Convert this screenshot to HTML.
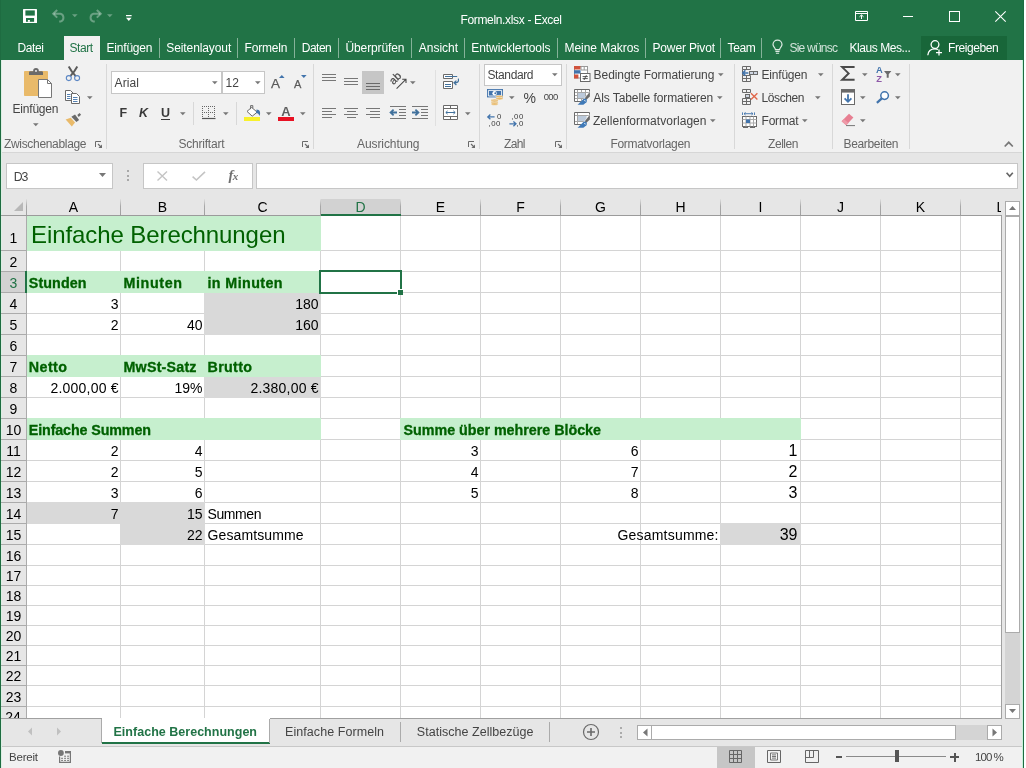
<!DOCTYPE html>
<html><head><meta charset="utf-8"><title>Formeln.xlsx - Excel</title>
<style>
html,body{margin:0;padding:0;}
body{width:1026px;height:768px;overflow:hidden;position:relative;background:#fff;font-family:"Liberation Sans",sans-serif;}
div,span.t,svg{position:absolute;}
span.t{white-space:pre;}
svg{overflow:visible;}
#w{left:0;top:0;width:1026px;height:768px;will-change:transform;}
</style></head><body><div id="w">
<div style="left:0px;top:0px;width:1024px;height:60px;background:#217346;"></div>
<div style="left:0px;top:60px;width:1024px;height:708px;background:#217346;"></div>
<div style="left:1px;top:60px;width:1022px;height:92px;background:#f1f1f1;"></div>
<div style="left:1px;top:152px;width:1022px;height:567px;background:#e6e6e6;"></div>
<div style="left:1px;top:152px;width:1022px;height:1px;background:#d6d6d6;"></div>
<div style="left:1px;top:719px;width:1022px;height:27px;background:#e6e6e6;"></div>
<div style="left:1px;top:746px;width:1022px;height:1px;background:#c8c8c8;"></div>
<div style="left:1px;top:747px;width:1022px;height:21px;background:#f1f1f1;"></div>
<div style="left:1024px;top:0px;width:2px;height:768px;background:#fff;"></div>
<div style="left:0px;top:0px;width:1px;height:768px;background:#1e6c41;"></div>
<div style="left:1023px;top:0px;width:1px;height:768px;background:#1e6c41;"></div>
<div style="left:1022px;top:60px;width:1px;height:708px;background:#c9efd9;"></div>
<div style="left:1px;top:60px;width:1px;height:708px;background:#dcefe3;"></div>
<span class="t" style="left:460.5px;top:14px;font-size:12px;line-height:12px;color:#fff;letter-spacing:-0.343px;">Formeln.xlsx - Excel</span>
<div style="left:64px;top:36px;width:36px;height:24px;background:#f1f1f1;"></div>
<span class="t" style="left:17.5px;top:42px;font-size:12px;line-height:12px;color:#fff;letter-spacing:-0.378px;">Datei</span>
<span class="t" style="left:69.5px;top:42px;font-size:12px;line-height:12px;color:#217346;letter-spacing:-0.461px;">Start</span>
<span class="t" style="left:106.5px;top:42px;font-size:12px;line-height:12px;color:#fff;letter-spacing:-0.196px;">Einfügen</span>
<span class="t" style="left:166.25px;top:42px;font-size:12px;line-height:12px;color:#fff;letter-spacing:-0.095px;">Seitenlayout</span>
<span class="t" style="left:244.5px;top:42px;font-size:12px;line-height:12px;color:#fff;letter-spacing:-0.168px;">Formeln</span>
<span class="t" style="left:301.75px;top:42px;font-size:12px;line-height:12px;color:#fff;letter-spacing:-0.505px;">Daten</span>
<span class="t" style="left:345.5px;top:42px;font-size:12px;line-height:12px;color:#fff;letter-spacing:-0.115px;">Überprüfen</span>
<span class="t" style="left:418.75px;top:42px;font-size:12px;line-height:12px;color:#fff;letter-spacing:-0.017px;">Ansicht</span>
<span class="t" style="left:471.25px;top:42px;font-size:12px;line-height:12px;color:#fff;letter-spacing:-0.055px;">Entwicklertools</span>
<span class="t" style="left:564.5px;top:42px;font-size:12px;line-height:12px;color:#fff;letter-spacing:-0.055px;">Meine Makros</span>
<span class="t" style="left:652.5px;top:42px;font-size:12px;line-height:12px;color:#fff;letter-spacing:-0.153px;">Power Pivot</span>
<span class="t" style="left:727.5px;top:42px;font-size:12px;line-height:12px;color:#fff;letter-spacing:-0.365px;">Team</span>
<div style="left:159px;top:38px;width:1px;height:20px;background:rgba(255,255,255,0.45);"></div>
<div style="left:237px;top:38px;width:1px;height:20px;background:rgba(255,255,255,0.45);"></div>
<div style="left:294px;top:38px;width:1px;height:20px;background:rgba(255,255,255,0.45);"></div>
<div style="left:338px;top:38px;width:1px;height:20px;background:rgba(255,255,255,0.45);"></div>
<div style="left:411px;top:38px;width:1px;height:20px;background:rgba(255,255,255,0.45);"></div>
<div style="left:464px;top:38px;width:1px;height:20px;background:rgba(255,255,255,0.45);"></div>
<div style="left:557px;top:38px;width:1px;height:20px;background:rgba(255,255,255,0.45);"></div>
<div style="left:645px;top:38px;width:1px;height:20px;background:rgba(255,255,255,0.45);"></div>
<div style="left:720px;top:38px;width:1px;height:20px;background:rgba(255,255,255,0.45);"></div>
<div style="left:761px;top:38px;width:1px;height:20px;background:rgba(255,255,255,0.45);"></div>
<span class="t" style="left:789.5px;top:42px;font-size:12px;line-height:12px;color:rgba(255,255,255,0.8);letter-spacing:-0.774px;">Sie wünsc</span>
<span class="t" style="left:849.5px;top:42px;font-size:12px;line-height:12px;color:#fff;letter-spacing:-0.434px;">Klaus Mes...</span>
<div style="left:921px;top:36px;width:86px;height:24px;background:#186639;"></div>
<span class="t" style="left:948px;top:42px;font-size:12px;line-height:12px;color:#fff;letter-spacing:-0.410px;">Freigeben</span>
<div style="left:106px;top:64px;width:1px;height:85px;background:#d8d8d8;"></div>
<div style="left:313px;top:64px;width:1px;height:85px;background:#d8d8d8;"></div>
<div style="left:479px;top:64px;width:1px;height:85px;background:#d8d8d8;"></div>
<div style="left:566px;top:64px;width:1px;height:85px;background:#d8d8d8;"></div>
<div style="left:734px;top:64px;width:1px;height:85px;background:#d8d8d8;"></div>
<div style="left:832px;top:64px;width:1px;height:85px;background:#d8d8d8;"></div>
<div style="left:909px;top:64px;width:1px;height:85px;background:#d8d8d8;"></div>
<div style="left:435px;top:70px;width:1px;height:56px;background:#e0e0e0;"></div>
<div style="left:193px;top:102px;width:1px;height:23px;background:#d8d8d8;"></div>
<div style="left:236px;top:102px;width:1px;height:23px;background:#d8d8d8;"></div>
<span class="t" style="left:4px;top:138px;font-size:12px;line-height:12px;color:#666;letter-spacing:-0.324px;">Zwischenablage</span>
<span class="t" style="left:178.5px;top:138px;font-size:12px;line-height:12px;color:#666;letter-spacing:-0.224px;">Schriftart</span>
<span class="t" style="left:357px;top:138px;font-size:12px;line-height:12px;color:#666;letter-spacing:-0.087px;">Ausrichtung</span>
<span class="t" style="left:504px;top:138px;font-size:12px;line-height:12px;color:#666;letter-spacing:-0.614px;">Zahl</span>
<span class="t" style="left:610.4px;top:138px;font-size:12px;line-height:12px;color:#666;letter-spacing:-0.303px;">Formatvorlagen</span>
<span class="t" style="left:768px;top:138px;font-size:12px;line-height:12px;color:#666;letter-spacing:-0.436px;">Zellen</span>
<span class="t" style="left:843.5px;top:138px;font-size:12px;line-height:12px;color:#666;letter-spacing:-0.338px;">Bearbeiten</span>
<span class="t" style="left:12.5px;top:103px;font-size:12px;line-height:12px;color:#444;letter-spacing:-0.196px;">Einfügen</span>
<div style="left:111px;top:71px;width:111px;height:23px;background:#fff;border:1px solid #c6c6c6;box-sizing:border-box;"></div>
<div style="left:222px;top:71px;width:43px;height:23px;background:#fff;border:1px solid #c6c6c6;box-sizing:border-box;"></div>
<span class="t" style="left:114.5px;top:77px;font-size:12px;line-height:12px;color:#444;letter-spacing:0.123px;">Arial</span>
<span class="t" style="left:225.5px;top:77px;font-size:12px;line-height:12px;color:#444;">12</span>
<span class="t" style="left:119.5px;top:107px;font-size:12.5px;line-height:12.5px;color:#3a3a3a;font-weight:bold;">F</span>
<span class="t" style="left:139px;top:107px;font-size:12.5px;line-height:12.5px;color:#3a3a3a;font-weight:bold;font-style:italic;">K</span>
<span class="t" style="left:161px;top:107px;font-size:12.5px;line-height:12.5px;color:#3a3a3a;font-weight:bold;">U</span>
<div style="left:161px;top:118.5px;width:9px;height:1px;background:#3a3a3a;"></div>
<div style="left:362px;top:71px;width:22px;height:23px;background:#c6c6c6;"></div>
<div style="left:484px;top:64px;width:78px;height:22px;background:#fff;border:1px solid #c6c6c6;box-sizing:border-box;"></div>
<span class="t" style="left:487.5px;top:69px;font-size:12px;line-height:12px;color:#444;letter-spacing:-0.386px;">Standard</span>
<span class="t" style="left:523.5px;top:91px;font-size:14px;line-height:14px;color:#444;">%</span>
<span class="t" style="left:543.8px;top:92px;font-size:9.5px;line-height:9.5px;color:#444;letter-spacing:-0.724px;">000</span>
<span class="t" style="left:593.6px;top:69px;font-size:12px;line-height:12px;color:#444;letter-spacing:-0.068px;">Bedingte Formatierung</span>
<span class="t" style="left:593.3px;top:92px;font-size:12px;line-height:12px;color:#444;letter-spacing:-0.084px;">Als Tabelle formatieren</span>
<span class="t" style="left:593px;top:115px;font-size:12px;line-height:12px;color:#444;letter-spacing:0.041px;">Zellenformatvorlagen</span>
<span class="t" style="left:761.5px;top:69px;font-size:12px;line-height:12px;color:#444;letter-spacing:-0.196px;">Einfügen</span>
<span class="t" style="left:761.5px;top:92px;font-size:12px;line-height:12px;color:#444;letter-spacing:-0.395px;">Löschen</span>
<span class="t" style="left:761.5px;top:115px;font-size:12px;line-height:12px;color:#444;letter-spacing:-0.201px;">Format</span>
<div style="left:6px;top:163px;width:107px;height:26px;background:#fff;border:1px solid #c6c6c6;box-sizing:border-box;"></div>
<span class="t" style="left:13.7px;top:171px;font-size:12.3px;line-height:12.3px;color:#444;letter-spacing:-1.123px;">D3</span>
<div style="left:143px;top:163px;width:110px;height:26px;background:#fff;border:1px solid #c6c6c6;box-sizing:border-box;"></div>
<div style="left:256px;top:163px;width:762px;height:26px;background:#fff;border:1px solid #c6c6c6;box-sizing:border-box;"></div>
<div style="left:127px;top:170px;width:2px;height:2px;background:#a8a8a8;"></div>
<div style="left:127px;top:174.5px;width:2px;height:2px;background:#a8a8a8;"></div>
<div style="left:127px;top:179px;width:2px;height:2px;background:#a8a8a8;"></div>
<div style="left:27px;top:216px;width:974px;height:502px;background:#fff;"></div>
<div style="left:26px;top:199px;width:1px;height:16px;background:linear-gradient(#e0e0e0,#a8a8a8 45%,#a0a0a0);"></div>
<div style="left:120px;top:199px;width:1px;height:16px;background:linear-gradient(#e0e0e0,#a8a8a8 45%,#a0a0a0);"></div>
<div style="left:204px;top:199px;width:1px;height:16px;background:linear-gradient(#e0e0e0,#a8a8a8 45%,#a0a0a0);"></div>
<div style="left:320px;top:199px;width:1px;height:16px;background:linear-gradient(#e0e0e0,#a8a8a8 45%,#a0a0a0);"></div>
<div style="left:400px;top:199px;width:1px;height:16px;background:linear-gradient(#e0e0e0,#a8a8a8 45%,#a0a0a0);"></div>
<div style="left:480px;top:199px;width:1px;height:16px;background:linear-gradient(#e0e0e0,#a8a8a8 45%,#a0a0a0);"></div>
<div style="left:560px;top:199px;width:1px;height:16px;background:linear-gradient(#e0e0e0,#a8a8a8 45%,#a0a0a0);"></div>
<div style="left:640px;top:199px;width:1px;height:16px;background:linear-gradient(#e0e0e0,#a8a8a8 45%,#a0a0a0);"></div>
<div style="left:720px;top:199px;width:1px;height:16px;background:linear-gradient(#e0e0e0,#a8a8a8 45%,#a0a0a0);"></div>
<div style="left:800px;top:199px;width:1px;height:16px;background:linear-gradient(#e0e0e0,#a8a8a8 45%,#a0a0a0);"></div>
<div style="left:880px;top:199px;width:1px;height:16px;background:linear-gradient(#e0e0e0,#a8a8a8 45%,#a0a0a0);"></div>
<div style="left:960px;top:199px;width:1px;height:16px;background:linear-gradient(#e0e0e0,#a8a8a8 45%,#a0a0a0);"></div>
<div style="left:1px;top:215px;width:1001px;height:1px;background:#9b9b9b;"></div>
<div style="left:26px;top:216px;width:1px;height:502px;background:#ababab;"></div>
<div style="left:1px;top:250px;width:25px;height:1px;background:#ababab;"></div>
<div style="left:1px;top:271px;width:25px;height:1px;background:#ababab;"></div>
<div style="left:1px;top:292px;width:25px;height:1px;background:#ababab;"></div>
<div style="left:1px;top:313px;width:25px;height:1px;background:#ababab;"></div>
<div style="left:1px;top:334px;width:25px;height:1px;background:#ababab;"></div>
<div style="left:1px;top:355px;width:25px;height:1px;background:#ababab;"></div>
<div style="left:1px;top:376px;width:25px;height:1px;background:#ababab;"></div>
<div style="left:1px;top:397px;width:25px;height:1px;background:#ababab;"></div>
<div style="left:1px;top:418px;width:25px;height:1px;background:#ababab;"></div>
<div style="left:1px;top:439px;width:25px;height:1px;background:#ababab;"></div>
<div style="left:1px;top:460px;width:25px;height:1px;background:#ababab;"></div>
<div style="left:1px;top:481px;width:25px;height:1px;background:#ababab;"></div>
<div style="left:1px;top:502px;width:25px;height:1px;background:#ababab;"></div>
<div style="left:1px;top:523px;width:25px;height:1px;background:#ababab;"></div>
<div style="left:1px;top:544px;width:25px;height:1px;background:#ababab;"></div>
<div style="left:1px;top:565px;width:25px;height:1px;background:#ababab;"></div>
<div style="left:1px;top:585px;width:25px;height:1px;background:#ababab;"></div>
<div style="left:1px;top:605px;width:25px;height:1px;background:#ababab;"></div>
<div style="left:1px;top:625px;width:25px;height:1px;background:#ababab;"></div>
<div style="left:1px;top:645px;width:25px;height:1px;background:#ababab;"></div>
<div style="left:1px;top:665px;width:25px;height:1px;background:#ababab;"></div>
<div style="left:1px;top:685px;width:25px;height:1px;background:#ababab;"></div>
<div style="left:1px;top:706px;width:25px;height:1px;background:#ababab;"></div>
<div style="left:120px;top:216px;width:1px;height:502px;background:#d4d4d4;"></div>
<div style="left:204px;top:216px;width:1px;height:502px;background:#d4d4d4;"></div>
<div style="left:320px;top:216px;width:1px;height:502px;background:#d4d4d4;"></div>
<div style="left:400px;top:216px;width:1px;height:502px;background:#d4d4d4;"></div>
<div style="left:480px;top:216px;width:1px;height:502px;background:#d4d4d4;"></div>
<div style="left:560px;top:216px;width:1px;height:502px;background:#d4d4d4;"></div>
<div style="left:640px;top:216px;width:1px;height:502px;background:#d4d4d4;"></div>
<div style="left:720px;top:216px;width:1px;height:502px;background:#d4d4d4;"></div>
<div style="left:800px;top:216px;width:1px;height:502px;background:#d4d4d4;"></div>
<div style="left:880px;top:216px;width:1px;height:502px;background:#d4d4d4;"></div>
<div style="left:960px;top:216px;width:1px;height:502px;background:#d4d4d4;"></div>
<div style="left:27px;top:250px;width:974px;height:1px;background:#d4d4d4;"></div>
<div style="left:27px;top:271px;width:974px;height:1px;background:#d4d4d4;"></div>
<div style="left:27px;top:292px;width:974px;height:1px;background:#d4d4d4;"></div>
<div style="left:27px;top:313px;width:974px;height:1px;background:#d4d4d4;"></div>
<div style="left:27px;top:334px;width:974px;height:1px;background:#d4d4d4;"></div>
<div style="left:27px;top:355px;width:974px;height:1px;background:#d4d4d4;"></div>
<div style="left:27px;top:376px;width:974px;height:1px;background:#d4d4d4;"></div>
<div style="left:27px;top:397px;width:974px;height:1px;background:#d4d4d4;"></div>
<div style="left:27px;top:418px;width:974px;height:1px;background:#d4d4d4;"></div>
<div style="left:27px;top:439px;width:974px;height:1px;background:#d4d4d4;"></div>
<div style="left:27px;top:460px;width:974px;height:1px;background:#d4d4d4;"></div>
<div style="left:27px;top:481px;width:974px;height:1px;background:#d4d4d4;"></div>
<div style="left:27px;top:502px;width:974px;height:1px;background:#d4d4d4;"></div>
<div style="left:27px;top:523px;width:974px;height:1px;background:#d4d4d4;"></div>
<div style="left:27px;top:544px;width:974px;height:1px;background:#d4d4d4;"></div>
<div style="left:27px;top:565px;width:974px;height:1px;background:#d4d4d4;"></div>
<div style="left:27px;top:585px;width:974px;height:1px;background:#d4d4d4;"></div>
<div style="left:27px;top:605px;width:974px;height:1px;background:#d4d4d4;"></div>
<div style="left:27px;top:625px;width:974px;height:1px;background:#d4d4d4;"></div>
<div style="left:27px;top:645px;width:974px;height:1px;background:#d4d4d4;"></div>
<div style="left:27px;top:665px;width:974px;height:1px;background:#d4d4d4;"></div>
<div style="left:27px;top:685px;width:974px;height:1px;background:#d4d4d4;"></div>
<div style="left:27px;top:706px;width:974px;height:1px;background:#d4d4d4;"></div>
<div style="left:1001px;top:216px;width:1px;height:503px;background:#a0a0a0;"></div>
<div style="left:1px;top:718px;width:1001px;height:1px;background:#a0a0a0;"></div>
<div style="left:321px;top:199px;width:79px;height:15px;background:#d2d2d2;"></div>
<div style="left:321px;top:214px;width:80px;height:2px;background:#217346;"></div>
<div style="left:1px;top:272px;width:24px;height:20px;background:#d2d2d2;"></div>
<div style="left:25px;top:271px;width:2px;height:22px;background:#217346;"></div>
<span class="t" style="left:68.83125px;top:200px;font-size:14px;line-height:14px;color:#000;">A</span>
<span class="t" style="left:157.83125px;top:200px;font-size:14px;line-height:14px;color:#000;">B</span>
<span class="t" style="left:257.44453125px;top:200px;font-size:14px;line-height:14px;color:#000;">C</span>
<span class="t" style="left:355.44453125px;top:200px;font-size:14px;line-height:14px;color:#217346;">D</span>
<span class="t" style="left:435.83125px;top:200px;font-size:14px;line-height:14px;color:#000;">E</span>
<span class="t" style="left:516.22421875px;top:200px;font-size:14px;line-height:14px;color:#000;">F</span>
<span class="t" style="left:595.05546875px;top:200px;font-size:14px;line-height:14px;color:#000;">G</span>
<span class="t" style="left:675.44453125px;top:200px;font-size:14px;line-height:14px;color:#000;">H</span>
<span class="t" style="left:758.55546875px;top:200px;font-size:14px;line-height:14px;color:#000;">I</span>
<span class="t" style="left:837.0px;top:200px;font-size:14px;line-height:14px;color:#000;">J</span>
<span class="t" style="left:915.83125px;top:200px;font-size:14px;line-height:14px;color:#000;">K</span>
<span class="t" style="left:996.5px;top:200px;font-size:14px;line-height:14px;color:#000;">L</span>
<div style="left:1001px;top:199px;width:21px;height:16px;background:#e6e6e6;"></div>
<svg style="left:13px;top:201px;" width="11" height="11" viewBox="0 0 11 11"><path d="M10 1 L10 10 L1 10 Z" fill="#b8b8b8"/></svg>
<span class="t" style="left:9.60703125px;top:231px;font-size:14px;line-height:14px;color:#000;">1</span>
<span class="t" style="left:9.60703125px;top:255px;font-size:14px;line-height:14px;color:#000;">2</span>
<span class="t" style="left:9.60703125px;top:276px;font-size:14px;line-height:14px;color:#217346;">3</span>
<span class="t" style="left:9.60703125px;top:297px;font-size:14px;line-height:14px;color:#000;">4</span>
<span class="t" style="left:9.60703125px;top:318px;font-size:14px;line-height:14px;color:#000;">5</span>
<span class="t" style="left:9.60703125px;top:339px;font-size:14px;line-height:14px;color:#000;">6</span>
<span class="t" style="left:9.60703125px;top:360px;font-size:14px;line-height:14px;color:#000;">7</span>
<span class="t" style="left:9.60703125px;top:381px;font-size:14px;line-height:14px;color:#000;">8</span>
<span class="t" style="left:9.60703125px;top:402px;font-size:14px;line-height:14px;color:#000;">9</span>
<span class="t" style="left:5.7140625px;top:423px;font-size:14px;line-height:14px;color:#000;">10</span>
<span class="t" style="left:6.23359375px;top:444px;font-size:14px;line-height:14px;color:#000;">11</span>
<span class="t" style="left:5.7140625px;top:465px;font-size:14px;line-height:14px;color:#000;">12</span>
<span class="t" style="left:5.7140625px;top:486px;font-size:14px;line-height:14px;color:#000;">13</span>
<span class="t" style="left:5.7140625px;top:507px;font-size:14px;line-height:14px;color:#000;">14</span>
<span class="t" style="left:5.7140625px;top:528px;font-size:14px;line-height:14px;color:#000;">15</span>
<span class="t" style="left:5.7140625px;top:549px;font-size:14px;line-height:14px;color:#000;">16</span>
<span class="t" style="left:5.7140625px;top:569px;font-size:14px;line-height:14px;color:#000;">17</span>
<span class="t" style="left:5.7140625px;top:589px;font-size:14px;line-height:14px;color:#000;">18</span>
<span class="t" style="left:5.7140625px;top:609px;font-size:14px;line-height:14px;color:#000;">19</span>
<span class="t" style="left:5.7140625px;top:629px;font-size:14px;line-height:14px;color:#000;">20</span>
<span class="t" style="left:5.7140625px;top:649px;font-size:14px;line-height:14px;color:#000;">21</span>
<span class="t" style="left:5.7140625px;top:669px;font-size:14px;line-height:14px;color:#000;">22</span>
<span class="t" style="left:5.7140625px;top:690px;font-size:14px;line-height:14px;color:#000;">23</span>
<div style="left:1px;top:707px;width:25px;height:11px;overflow:hidden"><span class="t" style="left:4.2px;top:3.2px;font-size:14px;line-height:14px;color:#000">24</span></div>
<div style="left:204px;top:292px;width:117px;height:22px;background:#d9d9d9;"></div>
<div style="left:204px;top:313px;width:117px;height:22px;background:#d9d9d9;"></div>
<div style="left:204px;top:376px;width:117px;height:22px;background:#d9d9d9;"></div>
<div style="left:27px;top:502px;width:178px;height:22px;background:#d9d9d9;"></div>
<div style="left:120px;top:523px;width:85px;height:22px;background:#d9d9d9;"></div>
<div style="left:720px;top:523px;width:81px;height:22px;background:#d9d9d9;"></div>
<div style="left:27px;top:216px;width:294px;height:35px;background:#c6efce;"></div>
<div style="left:27px;top:271px;width:294px;height:22px;background:#c6efce;"></div>
<div style="left:27px;top:355px;width:294px;height:22px;background:#c6efce;"></div>
<div style="left:27px;top:418px;width:294px;height:22px;background:#c6efce;"></div>
<div style="left:400px;top:418px;width:401px;height:22px;background:#c6efce;"></div>
<span class="t" style="left:31px;top:223px;font-size:24px;line-height:24px;color:#006100;letter-spacing:-0.085px;">Einfache Berechnungen</span>
<span class="t" style="left:28.8px;top:276px;font-size:14.3px;line-height:14.3px;color:#006100;letter-spacing:0.085px;font-weight:bold;-webkit-text-stroke:0.3px #006100;">Stunden</span>
<span class="t" style="left:123.5px;top:276px;font-size:14.3px;line-height:14.3px;color:#006100;letter-spacing:0.616px;font-weight:bold;-webkit-text-stroke:0.3px #006100;">Minuten</span>
<span class="t" style="left:207.5px;top:276px;font-size:14.3px;line-height:14.3px;color:#006100;letter-spacing:0.390px;font-weight:bold;-webkit-text-stroke:0.3px #006100;">in Minuten</span>
<span class="t" style="left:28.8px;top:360px;font-size:14.3px;line-height:14.3px;color:#006100;letter-spacing:0.415px;font-weight:bold;-webkit-text-stroke:0.3px #006100;">Netto</span>
<span class="t" style="left:123.5px;top:360px;font-size:14.3px;line-height:14.3px;color:#006100;letter-spacing:0.187px;font-weight:bold;-webkit-text-stroke:0.3px #006100;">MwSt-Satz</span>
<span class="t" style="left:207.5px;top:360px;font-size:14.3px;line-height:14.3px;color:#006100;letter-spacing:0.323px;font-weight:bold;-webkit-text-stroke:0.3px #006100;">Brutto</span>
<span class="t" style="left:28.8px;top:423px;font-size:14.3px;line-height:14.3px;color:#006100;letter-spacing:-0.126px;font-weight:bold;-webkit-text-stroke:0.3px #006100;">Einfache Summen</span>
<span class="t" style="left:403.5px;top:423px;font-size:14.3px;line-height:14.3px;color:#006100;letter-spacing:-0.017px;font-weight:bold;-webkit-text-stroke:0.3px #006100;">Summe über mehrere Blöcke</span>
<span class="t" style="right:907.5px;top:297px;font-size:14px;line-height:14px;color:#000;">3</span>
<span class="t" style="right:707.5px;top:297px;font-size:14px;line-height:14px;color:#000;">180</span>
<span class="t" style="right:907.5px;top:318px;font-size:14px;line-height:14px;color:#000;">2</span>
<span class="t" style="right:823.5px;top:318px;font-size:14px;line-height:14px;color:#000;">40</span>
<span class="t" style="right:707.5px;top:318px;font-size:14px;line-height:14px;color:#000;">160</span>
<span class="t" style="right:907.5px;top:381px;font-size:14px;line-height:14px;color:#000;letter-spacing:0.200px;margin-right:-0.200px;">2.000,00 €</span>
<span class="t" style="right:823.5px;top:381px;font-size:14px;line-height:14px;color:#000;">19%</span>
<span class="t" style="right:707.5px;top:381px;font-size:14px;line-height:14px;color:#000;letter-spacing:0.200px;margin-right:-0.200px;">2.380,00 €</span>
<span class="t" style="right:907.5px;top:444px;font-size:14px;line-height:14px;color:#000;">2</span>
<span class="t" style="right:823.5px;top:444px;font-size:14px;line-height:14px;color:#000;">4</span>
<span class="t" style="right:547.5px;top:444px;font-size:14px;line-height:14px;color:#000;">3</span>
<span class="t" style="right:387.5px;top:444px;font-size:14px;line-height:14px;color:#000;">6</span>
<span class="t" style="right:228.5px;top:443px;font-size:16px;line-height:16px;color:#000;">1</span>
<span class="t" style="right:907.5px;top:465px;font-size:14px;line-height:14px;color:#000;">2</span>
<span class="t" style="right:823.5px;top:465px;font-size:14px;line-height:14px;color:#000;">5</span>
<span class="t" style="right:547.5px;top:465px;font-size:14px;line-height:14px;color:#000;">4</span>
<span class="t" style="right:387.5px;top:465px;font-size:14px;line-height:14px;color:#000;">7</span>
<span class="t" style="right:228.5px;top:464px;font-size:16px;line-height:16px;color:#000;">2</span>
<span class="t" style="right:907.5px;top:486px;font-size:14px;line-height:14px;color:#000;">3</span>
<span class="t" style="right:823.5px;top:486px;font-size:14px;line-height:14px;color:#000;">6</span>
<span class="t" style="right:547.5px;top:486px;font-size:14px;line-height:14px;color:#000;">5</span>
<span class="t" style="right:387.5px;top:486px;font-size:14px;line-height:14px;color:#000;">8</span>
<span class="t" style="right:228.5px;top:485px;font-size:16px;line-height:16px;color:#000;">3</span>
<span class="t" style="right:907.5px;top:507px;font-size:14px;line-height:14px;color:#000;">7</span>
<span class="t" style="right:823.5px;top:507px;font-size:14px;line-height:14px;color:#000;">15</span>
<span class="t" style="right:823.5px;top:528px;font-size:14px;line-height:14px;color:#000;">22</span>
<span class="t" style="left:207.5px;top:507px;font-size:14px;line-height:14px;color:#000;letter-spacing:-0.404px;">Summen</span>
<span class="t" style="left:207.5px;top:528px;font-size:14px;line-height:14px;color:#000;letter-spacing:0.109px;">Gesamtsumme</span>
<span class="t" style="right:307.5px;top:528px;font-size:14px;line-height:14px;color:#000;letter-spacing:0.200px;margin-right:-0.200px;">Gesamtsumme:</span>
<span class="t" style="right:228.5px;top:527px;font-size:16px;line-height:16px;color:#000;">39</span>
<div style="left:319px;top:270px;width:83px;height:24px;border:2px solid #217346;box-sizing:border-box;"></div>
<div style="left:397px;top:289px;width:6px;height:6px;background:#fff;"></div>
<div style="left:398px;top:290px;width:5px;height:5px;background:#217346;"></div>
<div style="left:1005px;top:201px;width:15px;height:15px;background:#fff;border:1px solid #ababab;box-sizing:border-box;"></div>
<svg style="left:1009px;top:206px;" width="7" height="4" viewBox="0 0 7 4"><path d="M0 4 L3.5 0 L7 4 Z" fill="#777"/></svg>
<div style="left:1005px;top:216px;width:15px;height:417px;background:#fff;border:1px solid #ababab;box-sizing:border-box;"></div>
<div style="left:1005px;top:633px;width:15px;height:71px;background:#d4d4d4;"></div>
<div style="left:1005px;top:704px;width:15px;height:15px;background:#fff;border:1px solid #ababab;box-sizing:border-box;"></div>
<svg style="left:1009px;top:709px;" width="7" height="4" viewBox="0 0 7 4"><path d="M0 0 L3.5 4 L7 0 Z" fill="#777"/></svg>
<div style="left:637px;top:725px;width:15px;height:15px;background:#fff;border:1px solid #ababab;box-sizing:border-box;"></div>
<svg style="left:642px;top:728px;" width="6" height="9" viewBox="0 0 6 9"><path d="M5.5 0.5 L1 4.5 L5.5 8.5 Z" fill="#777"/></svg>
<div style="left:651px;top:725px;width:305px;height:15px;background:#fff;border:1px solid #ababab;box-sizing:border-box;"></div>
<div style="left:956px;top:725px;width:31px;height:15px;background:#d4d4d4;"></div>
<div style="left:987px;top:725px;width:15px;height:15px;background:#fff;border:1px solid #ababab;box-sizing:border-box;"></div>
<svg style="left:992px;top:728px;" width="6" height="9" viewBox="0 0 6 9"><path d="M0.5 0.5 L5 4.5 L0.5 8.5 Z" fill="#777"/></svg>
<div style="left:619.5px;top:727px;width:2px;height:2px;background:#ababab;"></div>
<div style="left:619.5px;top:731.5px;width:2px;height:2px;background:#ababab;"></div>
<div style="left:619.5px;top:736px;width:2px;height:2px;background:#ababab;"></div>
<div style="left:102px;top:718px;width:168px;height:25px;background:#fff;"></div>
<div style="left:102px;top:742px;width:168px;height:2px;background:#217346;"></div>
<div style="left:101px;top:719px;width:1px;height:24px;background:#ababab;"></div>
<div style="left:269px;top:719px;width:1px;height:24px;background:#ababab;"></div>
<span class="t" style="left:113.5px;top:726px;font-size:12.5px;line-height:12.5px;color:#217346;letter-spacing:0.021px;font-weight:bold;">Einfache Berechnungen</span>
<span class="t" style="left:285px;top:726px;font-size:12.5px;line-height:12.5px;color:#444;letter-spacing:0.069px;">Einfache Formeln</span>
<span class="t" style="left:416.75px;top:726px;font-size:12.5px;line-height:12.5px;color:#444;letter-spacing:0.038px;">Statische Zellbezüge</span>
<div style="left:400px;top:722px;width:1px;height:20px;background:#ababab;"></div>
<div style="left:549px;top:722px;width:1px;height:20px;background:#ababab;"></div>
<svg style="left:27px;top:727px;" width="6" height="9" viewBox="0 0 6 9"><path d="M5 0.5 L1 4.5 L5 8.5 Z" fill="#c0c0c0"/></svg>
<svg style="left:56px;top:727px;" width="6" height="9" viewBox="0 0 6 9"><path d="M1 0.5 L5 4.5 L1 8.5 Z" fill="#c0c0c0"/></svg>
<svg style="left:582px;top:723px;" width="18" height="18" viewBox="0 0 18 18"><circle cx="9" cy="9" r="7.5" fill="none" stroke="#6a6a6a" stroke-width="1.2"/><path d="M9 5v8M5 9h8" stroke="#6a6a6a" stroke-width="1.6"/></svg>
<span class="t" style="left:9px;top:752px;font-size:11.5px;line-height:11.5px;color:#444;letter-spacing:-0.208px;">Bereit</span>
<div style="left:717px;top:747px;width:38px;height:21px;background:#c6c6c6;"></div>
<span class="t" style="left:975px;top:752px;font-size:11.5px;line-height:11.5px;color:#444;letter-spacing:-0.952px;">100 %</span>
<div style="left:846px;top:756px;width:100px;height:1px;background:#8a8a8a;"></div>
<div style="left:895px;top:750px;width:4px;height:12px;background:#555;"></div>
<div style="left:836px;top:756px;width:6px;height:2px;background:#555;"></div>
<div style="left:950px;top:756px;width:9px;height:2px;background:#555;"></div>
<div style="left:953.5px;top:752.5px;width:2px;height:9px;background:#555;"></div>
<svg style="left:23px;top:9px;" width="14" height="14" viewBox="0 0 14 14"><rect x="0" y="0" width="14" height="14" rx="0.6" fill="#fff"/><rect x="2.4" y="1.4" width="9.4" height="5.2" fill="#217346"/><rect x="3" y="9" width="8.1" height="3.8" fill="#217346"/><rect x="4.9" y="11" width="2" height="1.8" fill="#fff"/></svg>
<svg style="left:52px;top:9px;" width="14" height="13" viewBox="0 0 14 13"><path d="M5.2 1 L1.2 4.8 L5.2 8.6" fill="none" stroke="rgba(255,255,255,0.33)" stroke-width="2"/><path d="M1.6 4.8 H8.6 A4.1 4.1 0 0 1 8.6 12.6 H7.2" fill="none" stroke="rgba(255,255,255,0.33)" stroke-width="2"/></svg>
<svg style="left:72px;top:14px;" width="6" height="4" viewBox="0 0 6 4"><path d="M0 0.3 H5.6 L2.8 3.3 Z" fill="rgba(255,255,255,0.33)"/></svg>
<svg style="left:87px;top:9px;" width="15" height="13" viewBox="0 0 15 13"><path d="M9.8 1 L13.8 4.8 L9.8 8.6" fill="none" stroke="rgba(255,255,255,0.33)" stroke-width="2"/><path d="M13.4 4.8 H6.4 A4.1 4.1 0 0 0 6.4 12.6 H7.8" fill="none" stroke="rgba(255,255,255,0.33)" stroke-width="2"/></svg>
<svg style="left:107px;top:14px;" width="6" height="4" viewBox="0 0 6 4"><path d="M0 0.3 H5.6 L2.8 3.3 Z" fill="rgba(255,255,255,0.33)"/></svg>
<svg style="left:126px;top:15px;" width="6" height="6" viewBox="0 0 6 6"><path d="M0 0 H5.6 V1.2 H0 Z M0 2.8 H5.6 L2.8 5.9 Z" fill="#fff"/></svg>
<svg style="left:855px;top:11px;" width="13" height="10" viewBox="0 0 13 10"><path d="M0.5 0.5 H12.5 V9.5 H0.5 Z M0.5 2.5 H12.5" fill="none" stroke="#fff" stroke-width="1"/><path d="M6.5 8 V4.2 M4.5 5.8 L6.5 3.9 L8.5 5.8" fill="none" stroke="#fff" stroke-width="1"/></svg>
<div style="left:903px;top:16px;width:10px;height:1px;background:#fff;"></div>
<div style="left:949px;top:11px;width:11px;height:11px;border:1px solid #fff;box-sizing:border-box;"></div>
<svg style="left:995px;top:11px;" width="11" height="11" viewBox="0 0 11 11"><path d="M0.3 0.3 L10.7 10.7 M10.7 0.3 L0.3 10.7" stroke="#fff" stroke-width="1.1" fill="none"/></svg>
<svg style="left:772px;top:40px;" width="11" height="14" viewBox="0 0 11 14"><path d="M3.4 9.6 C3.4 7.6 1 7 1 4.6 A4.5 4.5 0 0 1 10 4.6 C10 7 7.6 7.6 7.6 9.6 Z" fill="none" stroke="rgba(255,255,255,0.85)" stroke-width="1.2"/><path d="M3.4 11.4 H7.6 M3.9 13.2 H7.1" stroke="rgba(255,255,255,0.85)" stroke-width="1.1"/></svg>
<svg style="left:927px;top:40px;" width="16" height="16" viewBox="0 0 16 16"><circle cx="8" cy="4.6" r="3.9" fill="none" stroke="#fff" stroke-width="1.3"/><path d="M0.8 15.3 C1.2 10.8 4 8.9 8 8.9 C9.3 8.9 10.2 9.1 11 9.5" fill="none" stroke="#fff" stroke-width="1.3"/><path d="M12 9.6 V15.6 M9 12.6 H15" stroke="#fff" stroke-width="1.3"/></svg>
<svg style="left:24px;top:68px;" width="28" height="30" viewBox="0 0 28 30"><rect x="0" y="3" width="24" height="25" rx="0.8" fill="#e9ba6a"/><path d="M5 7 V4.4 Q5 3.3 6.1 3.3 H9.2 V2.6 A2.8 2.6 0 0 1 14.8 2.6 V3.3 H17.9 Q19 3.3 19 4.4 V7 Z" fill="#6a6a6a"/><circle cx="12" cy="2.9" r="0.9" fill="#fff"/><path d="M14.5 11.5 H23.5 L27.5 15.5 V29.5 H14.5 Z" fill="#fff" stroke="#777" stroke-width="1"/><path d="M23.5 11.5 V15.5 H27.5" fill="none" stroke="#777" stroke-width="1"/></svg>
<svg style="left:33px;top:123px;" width="6" height="4" viewBox="0 0 6 4"><path d="M0 0.3 H5.6 L2.8 3.3 Z" fill="#777"/></svg>
<svg style="left:65px;top:66px;" width="16" height="15" viewBox="0 0 16 15"><path d="M3.7 0.5 Q6.4 5.6 10.7 10.2 M12.3 0.5 Q9.6 5.6 5.3 10.2" stroke="#5a5a5a" stroke-width="1.9" fill="none"/><circle cx="3.8" cy="12.1" r="2.5" fill="none" stroke="#5b86c4" stroke-width="1.1"/><circle cx="12.1" cy="12.1" r="2.5" fill="none" stroke="#5b86c4" stroke-width="1.1"/></svg>
<svg style="left:65px;top:90px;" width="15" height="14" viewBox="0 0 15 14"><path d="M0.5 0.5 H5.5 L8.5 3.5 V10.5 H0.5 Z" fill="#fff" stroke="#6a6a6a"/><path d="M2 4.5H5.5M2 6.5H5.5M2 8.5H5.5" stroke="#4274ac" stroke-width="0.9"/><path d="M6.5 3.5 H11.5 L14.5 6.5 V13.5 H6.5 Z" fill="#fff" stroke="#6a6a6a"/><path d="M8 7.5H12.5M8 9.5H12.5M8 11.5H12.5" stroke="#4274ac" stroke-width="0.9"/></svg>
<svg style="left:87px;top:96px;" width="6" height="4" viewBox="0 0 6 4"><path d="M0 0.3 H5.6 L2.8 3.3 Z" fill="#777"/></svg>
<svg style="left:65px;top:113px;" width="17" height="14" viewBox="0 0 17 14"><path d="M0.65 6.6 L5.75 4.8 L10 9.6 L6.85 13.4 Z" fill="#e9ba6a"/><path d="M6.4 3.7 L10 1.4 L14.1 6.9 L11.4 9 Z" fill="#6a6a6a"/><path d="M12.3 1.9 L14.6 0 L16.1 1.7 L13.7 4.1 Z" fill="#6a6a6a"/></svg>
<svg style="left:95px;top:141px;" width="8" height="8" viewBox="0 0 8 8"><path d="M0.5 6 V0.5 H6" fill="none" stroke="#6a6a6a"/><path d="M3 3 L6 6" fill="none" stroke="#6a6a6a" stroke-width="1.1"/><path d="M7 3.4 V7 H3.4 Z" fill="#6a6a6a"/></svg>
<svg style="left:302px;top:141px;" width="8" height="8" viewBox="0 0 8 8"><path d="M0.5 6 V0.5 H6" fill="none" stroke="#6a6a6a"/><path d="M3 3 L6 6" fill="none" stroke="#6a6a6a" stroke-width="1.1"/><path d="M7 3.4 V7 H3.4 Z" fill="#6a6a6a"/></svg>
<svg style="left:468px;top:141px;" width="8" height="8" viewBox="0 0 8 8"><path d="M0.5 6 V0.5 H6" fill="none" stroke="#6a6a6a"/><path d="M3 3 L6 6" fill="none" stroke="#6a6a6a" stroke-width="1.1"/><path d="M7 3.4 V7 H3.4 Z" fill="#6a6a6a"/></svg>
<svg style="left:555px;top:141px;" width="8" height="8" viewBox="0 0 8 8"><path d="M0.5 6 V0.5 H6" fill="none" stroke="#6a6a6a"/><path d="M3 3 L6 6" fill="none" stroke="#6a6a6a" stroke-width="1.1"/><path d="M7 3.4 V7 H3.4 Z" fill="#6a6a6a"/></svg>
<svg style="left:212px;top:81px;" width="6" height="4" viewBox="0 0 6 4"><path d="M0 0.3 H5.6 L2.8 3.3 Z" fill="#777"/></svg>
<svg style="left:255px;top:81px;" width="6" height="4" viewBox="0 0 6 4"><path d="M0 0.3 H5.6 L2.8 3.3 Z" fill="#777"/></svg>
<span class="t" style="left:271px;top:77px;font-size:13.5px;line-height:13.5px;color:#5a5a5a;-webkit-text-stroke:0.25px #5a5a5a;">A</span>
<svg style="left:279px;top:75px;" width="6" height="3" viewBox="0 0 6 3"><path d="M0 3 L2.8 0 L5.6 3 Z" fill="#4274ac"/></svg>
<span class="t" style="left:294px;top:79px;font-size:11px;line-height:11px;color:#5a5a5a;-webkit-text-stroke:0.25px #5a5a5a;">A</span>
<svg style="left:301px;top:75px;" width="6" height="3" viewBox="0 0 6 3"><path d="M0 0 L2.8 3 L5.6 0 Z" fill="#4274ac"/></svg>
<svg style="left:180px;top:112px;" width="6" height="4" viewBox="0 0 6 4"><path d="M0 0.3 H5.6 L2.8 3.3 Z" fill="#777"/></svg>
<svg style="left:202px;top:106px;" width="14" height="14" viewBox="0 0 14 14"><path d="M0 0.5H13 M0 6.5H13 M0.5 0V12 M6.5 0V12 M12.5 0V12" stroke="#666" stroke-width="1" stroke-dasharray="1 1" fill="none" shape-rendering="crispEdges"/><path d="M0 12.5 H13.5" stroke="#555" stroke-width="1.2"/></svg>
<svg style="left:223px;top:112px;" width="6" height="4" viewBox="0 0 6 4"><path d="M0 0.3 H5.6 L2.8 3.3 Z" fill="#777"/></svg>
<div style="left:244px;top:117px;width:16px;height:4px;background:#f8f12c;"></div>
<svg style="left:246px;top:105px;" width="15" height="12" viewBox="0 0 15 12"><path d="M5.6 2.4 L11.2 7.2 L6.2 11.2 L1 6.4 Z" fill="#fff" stroke="#6a6a6a" stroke-width="1"/><path d="M4.6 4.2 V0.6 H6.8 V3.2" fill="none" stroke="#6a6a6a" stroke-width="1"/><path d="M10.6 4.6 C13.6 4.6 15 7.4 13.6 11 C12.8 9.2 12 8.2 10 7.8 Z" fill="#4274ac"/></svg>
<svg style="left:266px;top:112px;" width="6" height="4" viewBox="0 0 6 4"><path d="M0 0.3 H5.6 L2.8 3.3 Z" fill="#777"/></svg>
<span class="t" style="left:281.2px;top:105px;font-size:13px;line-height:13px;color:#606060;font-weight:bold;">A</span>
<div style="left:278px;top:117px;width:16px;height:4px;background:#e81123;"></div>
<svg style="left:300px;top:112px;" width="6" height="4" viewBox="0 0 6 4"><path d="M0 0.3 H5.6 L2.8 3.3 Z" fill="#777"/></svg>
<div style="left:322px;top:74px;width:14px;height:1px;background:#777;"></div>
<div style="left:322px;top:77px;width:14px;height:1px;background:#777;"></div>
<div style="left:322px;top:80px;width:14px;height:1px;background:#777;"></div>
<div style="left:344px;top:78px;width:14px;height:1px;background:#777;"></div>
<div style="left:344px;top:81px;width:14px;height:1px;background:#777;"></div>
<div style="left:344px;top:84px;width:14px;height:1px;background:#777;"></div>
<div style="left:366px;top:83px;width:14px;height:1px;background:#6a6a6a;"></div>
<div style="left:366px;top:86px;width:14px;height:1px;background:#6a6a6a;"></div>
<div style="left:366px;top:89px;width:14px;height:1px;background:#6a6a6a;"></div>
<div style="left:322px;top:108px;width:14px;height:1px;background:#777;"></div>
<div style="left:344px;top:108px;width:14px;height:1px;background:#777;"></div>
<div style="left:366px;top:108px;width:14px;height:1px;background:#777;"></div>
<div style="left:322px;top:111px;width:10px;height:1px;background:#777;"></div>
<div style="left:347px;top:111px;width:9px;height:1px;background:#777;"></div>
<div style="left:370px;top:111px;width:10px;height:1px;background:#777;"></div>
<div style="left:322px;top:114px;width:14px;height:1px;background:#777;"></div>
<div style="left:344px;top:114px;width:14px;height:1px;background:#777;"></div>
<div style="left:366px;top:114px;width:14px;height:1px;background:#777;"></div>
<div style="left:322px;top:117px;width:10px;height:1px;background:#777;"></div>
<div style="left:347px;top:117px;width:9px;height:1px;background:#777;"></div>
<div style="left:370px;top:117px;width:10px;height:1px;background:#777;"></div>
<svg style="left:390px;top:74px;" width="17" height="15" viewBox="0 0 17 15"><text x="0" y="0" font-size="11" fill="#4a4a4a" stroke="#4a4a4a" stroke-width="0.25" transform="translate(3.4,11.2) rotate(-45)" font-family="Liberation Sans">ab</text><path d="M6.6 14.6 L15.6 5.6 M12.2 5.2 H16 V9" fill="none" stroke="#4a4a4a" stroke-width="1.1"/></svg>
<svg style="left:410px;top:81px;" width="6" height="4" viewBox="0 0 6 4"><path d="M0 0.3 H5.6 L2.8 3.3 Z" fill="#777"/></svg>
<div style="left:390px;top:106px;width:16px;height:1px;background:#777;"></div>
<div style="left:390px;top:118px;width:16px;height:1px;background:#777;"></div>
<div style="left:398.5px;top:109px;width:7.5px;height:1px;background:#777;"></div>
<div style="left:398.5px;top:112px;width:7.5px;height:1px;background:#777;"></div>
<div style="left:398.5px;top:115px;width:7.5px;height:1px;background:#777;"></div>
<svg style="left:390px;top:109px;" width="8" height="7" viewBox="0 0 8 7"><path d="M7 3.5 H1 M3.6 0.7 L0.6 3.5 L3.6 6.3" fill="none" stroke="#41719c" stroke-width="1.8"/></svg>
<div style="left:412px;top:106px;width:16px;height:1px;background:#777;"></div>
<div style="left:412px;top:118px;width:16px;height:1px;background:#777;"></div>
<div style="left:420.5px;top:109px;width:7.5px;height:1px;background:#777;"></div>
<div style="left:420.5px;top:112px;width:7.5px;height:1px;background:#777;"></div>
<div style="left:420.5px;top:115px;width:7.5px;height:1px;background:#777;"></div>
<svg style="left:412px;top:109px;" width="8" height="7" viewBox="0 0 8 7"><path d="M0 3.5 H6 M3.4 0.7 L6.4 3.5 L3.4 6.3" fill="none" stroke="#41719c" stroke-width="1.8"/></svg>
<svg style="left:443px;top:74px;" width="17" height="15" viewBox="0 0 17 15"><path d="M0.5 0.5 H9.5 V4.5 H0.5 Z M0.5 7.5 H9.5 V14.5 H0.5 Z" fill="#fff" stroke="#6a6a6a"/><path d="M2 2.5 H14.2" stroke="#41719c" stroke-width="1"/><path d="M2 10.5H8M2 12.5H8" stroke="#41719c" stroke-width="1"/><path d="M15.4 4.6 C16 8 14.6 8.8 11.2 8.8 M13.4 6.6 L11 8.8 L13.4 11" fill="none" stroke="#41719c" stroke-width="1.2"/></svg>
<svg style="left:443px;top:105px;" width="16" height="15" viewBox="0 0 16 15"><path d="M0.5 0.5 H14.5 V14.5 H0.5 Z M0.5 3.5 H14.5 M0.5 11.5 H14.5 M7.5 0.5 V3.5 M7.5 11.5 V14.5" fill="#fff" stroke="#6a6a6a"/><path d="M3 7.5 H12 M4.6 5.9 L2.8 7.5 L4.6 9.1 M10.4 5.9 L12.2 7.5 L10.4 9.1" fill="none" stroke="#41719c" stroke-width="1"/></svg>
<svg style="left:465px;top:112px;" width="6" height="4" viewBox="0 0 6 4"><path d="M0 0.3 H5.6 L2.8 3.3 Z" fill="#777"/></svg>
<svg style="left:552px;top:73px;" width="6" height="4" viewBox="0 0 6 4"><path d="M0 0.3 H5.6 L2.8 3.3 Z" fill="#777"/></svg>
<svg style="left:487px;top:89px;" width="17" height="16" viewBox="0 0 17 16"><rect x="0" y="0" width="16" height="8.4" fill="#4274ac"/><path d="M1.4 1.4 H14.6 V7 H1.4 Z" fill="none" stroke="#fff" stroke-width="0.9"/><circle cx="7.6" cy="4.2" r="2.2" fill="#fff"/><circle cx="8.3" cy="4.2" r="1" fill="#4274ac"/><ellipse cx="12.4" cy="7.6" rx="3.6" ry="1.3" fill="#e9ba6a" stroke="#f1f1f1" stroke-width="0.5"/><ellipse cx="12.4" cy="9.6" rx="3.6" ry="1.3" fill="#e9ba6a" stroke="#f1f1f1" stroke-width="0.5"/><ellipse cx="7.6" cy="11.4" rx="3.6" ry="1.3" fill="#e9ba6a" stroke="#f1f1f1" stroke-width="0.5"/><ellipse cx="7.6" cy="13.2" rx="3.6" ry="1.3" fill="#e9ba6a" stroke="#f1f1f1" stroke-width="0.5"/><ellipse cx="7.6" cy="15" rx="3.6" ry="1.3" fill="#e9ba6a" stroke="#f1f1f1" stroke-width="0.5"/></svg>
<svg style="left:509px;top:96px;" width="6" height="4" viewBox="0 0 6 4"><path d="M0 0.3 H5.6 L2.8 3.3 Z" fill="#777"/></svg>
<svg style="left:487px;top:113px;" width="15" height="14" viewBox="0 0 15 14"><text x="10" y="5.6" font-family="Liberation Sans" fill="#3a3a3a" font-size="7.8" letter-spacing="0.6">0</text><text x="1.4" y="12.7" font-family="Liberation Sans" fill="#3a3a3a" font-size="7.8" letter-spacing="0.6">,00</text><path d="M7.6 3.9 H1 M3.4 1.5 L0.8 3.9 L3.4 6.3" fill="none" stroke="#4274ac" stroke-width="1.3"/></svg>
<svg style="left:509px;top:113px;" width="15" height="14" viewBox="0 0 15 14"><text x="2.2" y="5.6" font-family="Liberation Sans" fill="#3a3a3a" font-size="7.8" letter-spacing="0.6">,00</text><text x="7.2" y="12.7" font-family="Liberation Sans" fill="#3a3a3a" font-size="7.8" letter-spacing="0.6">,0</text><path d="M0.4 10.8 H6.8 M4.4 8.4 L7 10.8 L4.4 13.2" fill="none" stroke="#4274ac" stroke-width="1.3"/></svg>
<svg style="left:574px;top:66px;" width="17" height="16" viewBox="0 0 17 16"><rect x="0.5" y="0.5" width="13" height="11.5" fill="#fff" stroke="#999"/><path d="M0 0 H6.6 V3.4 H0 Z M0 8.4 H4.4 V12.4 H0 Z" fill="#d0533c"/><path d="M0 4.2 H6.6 V7.6 H0 Z" fill="#4274ac"/><path d="M7 0.5 V4 H13.5 M10.2 0.5 V4" fill="none" stroke="#999"/><rect x="6.5" y="7.5" width="9.5" height="8" fill="#fff" stroke="#6a6a6a"/><path d="M8.6 10.6 H13.8 M8.6 12.6 H13.8 M12.4 9.2 L10 14" stroke="#444" stroke-width="0.9" fill="none"/></svg>
<svg style="left:574px;top:89px;" width="17" height="17" viewBox="0 0 17 17"><rect x="0.5" y="0.5" width="15" height="12" fill="#fff"/><path d="M0.5 3.5 H15.5 M0.5 6.5 H15.5 M0.5 9.5 H12 M3.5 0.5 V12 M7.5 0.5 V12 M11.5 0.5 V9" stroke="#a6a6a6" fill="none"/><rect x="4" y="4" width="7" height="5" fill="#bccadb"/><path d="M0.5 0.5 H15.5 V12.5 H0.5 Z" fill="none" stroke="#6a6a6a"/><path d="M8.4 11.2 L17 0.8 V14 H12.8 L9.4 17 H2.4 Z" fill="#f1f1f1"/><path d="M10.8 9.2 L15.9 2.8 V7.4 L12.1 10.9 Z" fill="#6a6a6a"/><path d="M3.6 15.8 L9.4 9.9 Q11.4 9 12.6 10.6 Q13.4 12.2 12.4 13.2 L9.4 15.8 Z" fill="#3f79b7"/><path d="M10.5 11 L11.3 12.4" stroke="#fff" stroke-width="0.9"/></svg>
<svg style="left:574px;top:112px;" width="17" height="17" viewBox="0 0 17 17"><rect x="0.5" y="0.5" width="15" height="12" fill="#fff"/><path d="M0.5 3.5 H15.5 M0.5 9.5 H12 M3.5 0.5 V12" stroke="#a6a6a6" fill="none"/><rect x="4" y="4" width="8.6" height="5" fill="#bccadb"/><path d="M0.5 0.5 H15.5 V12.5 H0.5 Z" fill="none" stroke="#6a6a6a"/><path d="M8.4 11.2 L17 0.8 V14 H12.8 L9.4 17 H2.4 Z" fill="#f1f1f1"/><path d="M10.8 9.2 L15.9 2.8 V7.4 L12.1 10.9 Z" fill="#6a6a6a"/><path d="M3.6 15.8 L9.4 9.9 Q11.4 9 12.6 10.6 Q13.4 12.2 12.4 13.2 L9.4 15.8 Z" fill="#3f79b7"/><path d="M10.5 11 L11.3 12.4" stroke="#fff" stroke-width="0.9"/></svg>
<svg style="left:718px;top:73px;" width="6" height="4" viewBox="0 0 6 4"><path d="M0 0.3 H5.6 L2.8 3.3 Z" fill="#777"/></svg>
<svg style="left:717px;top:96px;" width="6" height="4" viewBox="0 0 6 4"><path d="M0 0.3 H5.6 L2.8 3.3 Z" fill="#777"/></svg>
<svg style="left:710px;top:119px;" width="6" height="4" viewBox="0 0 6 4"><path d="M0 0.3 H5.6 L2.8 3.3 Z" fill="#777"/></svg>
<svg style="left:742px;top:66px;" width="17" height="16" viewBox="0 0 17 16"><path d="M0.5 0.5 H8.5 V3.5 H0.5 Z M4.5 0.5 V3.5 M0.5 9.5 H8.5 V15.5 H0.5 Z M0.5 12.5 H8.5 M4.5 9.5 V15.5 M0.5 3.5 V9.5" stroke="#6a6a6a" fill="none"/><rect x="7.5" y="5.5" width="8" height="3" fill="#cfd6e2" stroke="#6a6a6a"/><path d="M11.5 5.5V8.5" stroke="#6a6a6a" fill="none"/><path d="M6.4 7 H1 M3.4 4.4 L0.8 7 L3.4 9.6" fill="none" stroke="#4274ac" stroke-width="1.5"/></svg>
<svg style="left:742px;top:89px;" width="17" height="16" viewBox="0 0 17 16"><path d="M0.5 0.5 H8.5 V3.5 H0.5 Z M4.5 0.5 V3.5 M0.5 9.5 H8.5 V15.5 H0.5 Z M0.5 12.5 H8.5 M4.5 9.5 V15.5" stroke="#6a6a6a" fill="none"/><rect x="3.5" y="5.5" width="4" height="3" fill="#cfd6e2" stroke="#6a6a6a"/><path d="M9 4.2 L15.4 10.4 M15.4 4.2 L9 10.4" stroke="#e0684b" stroke-width="1.4" fill="none"/></svg>
<svg style="left:742px;top:112px;" width="17" height="16" viewBox="0 0 17 16"><path d="M0.5 0.4 V3 M12.5 0.4 V3 M2 1.7 H11 M3.6 0.4 L2 1.7 L3.6 3 M9.4 0.4 L11 1.7 L9.4 3" fill="none" stroke="#4274ac" stroke-width="0.9"/><rect x="0.5" y="4.5" width="14" height="10" fill="#fff" stroke="#6a6a6a"/><path d="M0.5 7.5 H14.5 M0.5 11 H14.5 M4 4.5 V14.5 M8 4.5 V14.5 M11.5 4.5 V14.5" stroke="#aaa" fill="none"/><rect x="4" y="7.5" width="4" height="3.5" fill="#4274ac"/><path d="M1 15.5 H6 M8 15.5 H13" stroke="#6a6a6a"/></svg>
<svg style="left:818px;top:73px;" width="6" height="4" viewBox="0 0 6 4"><path d="M0 0.3 H5.6 L2.8 3.3 Z" fill="#777"/></svg>
<svg style="left:815px;top:96px;" width="6" height="4" viewBox="0 0 6 4"><path d="M0 0.3 H5.6 L2.8 3.3 Z" fill="#777"/></svg>
<svg style="left:802px;top:119px;" width="6" height="4" viewBox="0 0 6 4"><path d="M0 0.3 H5.6 L2.8 3.3 Z" fill="#777"/></svg>
<svg style="left:840px;top:66px;" width="15" height="15" viewBox="0 0 15 15"><path d="M14.6 1.1 H2.2 L8.6 7.4 L2.2 13.8 H14.6" fill="none" stroke="#4a4a4a" stroke-width="2" stroke-linejoin="miter"/></svg>
<svg style="left:862px;top:73px;" width="6" height="4" viewBox="0 0 6 4"><path d="M0 0.3 H5.6 L2.8 3.3 Z" fill="#777"/></svg>
<span class="t" style="left:876px;top:66px;font-size:9.3px;line-height:9.3px;color:#4274ac;font-weight:bold;">A</span>
<span class="t" style="left:876.3px;top:75px;font-size:9.3px;line-height:9.3px;color:#8e59a8;font-weight:bold;">Z</span>
<svg style="left:884px;top:71px;" width="8" height="7" viewBox="0 0 8 7"><path d="M0 0 H7.4 L4.7 3.2 V6.8 H2.7 V3.2 Z" fill="#6a6a6a"/></svg>
<svg style="left:895px;top:73px;" width="6" height="4" viewBox="0 0 6 4"><path d="M0 0.3 H5.6 L2.8 3.3 Z" fill="#777"/></svg>
<svg style="left:841px;top:89px;" width="14" height="16" viewBox="0 0 14 16"><rect x="0.5" y="0.5" width="13" height="15" fill="#fff" stroke="#6a6a6a"/><rect x="0" y="0" width="14" height="3.6" fill="#6a6a6a"/><path d="M7 5.2 V12.6 M3.6 9.4 L7 12.8 L10.4 9.4" fill="none" stroke="#4274ac" stroke-width="1.8"/></svg>
<svg style="left:860px;top:96px;" width="6" height="4" viewBox="0 0 6 4"><path d="M0 0.3 H5.6 L2.8 3.3 Z" fill="#777"/></svg>
<svg style="left:876px;top:91px;" width="14" height="13" viewBox="0 0 14 13"><circle cx="8.6" cy="4.6" r="3.8" fill="#fff" stroke="#4274ac" stroke-width="1.5"/><path d="M5.8 7.4 L0.9 11.9" stroke="#4274ac" stroke-width="2.2"/></svg>
<svg style="left:895px;top:96px;" width="6" height="4" viewBox="0 0 6 4"><path d="M0 0.3 H5.6 L2.8 3.3 Z" fill="#777"/></svg>
<svg style="left:841px;top:113px;" width="15" height="14" viewBox="0 0 15 14"><path d="M0.6 8.2 L8 0.8 L12.4 4.6 L5.2 12.2 Z" fill="#e77f92"/><path d="M0.6 8.2 L2.8 6 L7.4 10 L5.2 12.2 Z" fill="#ee9aa8"/><path d="M5 12.6 H14" stroke="#777" stroke-width="1"/></svg>
<svg style="left:860px;top:119px;" width="6" height="4" viewBox="0 0 6 4"><path d="M0 0.3 H5.6 L2.8 3.3 Z" fill="#777"/></svg>
<svg style="left:1004px;top:141px;" width="10" height="6" viewBox="0 0 10 6"><path d="M0.7 5.5 L4.75 1.3 L8.8 5.5" fill="none" stroke="#777" stroke-width="1.7"/></svg>
<svg style="left:99px;top:173px;" width="8" height="5" viewBox="0 0 8 5"><path d="M0 0 H7 L3.5 4 Z" fill="#777"/></svg>
<svg style="left:157px;top:171px;" width="11" height="10" viewBox="0 0 11 10"><path d="M0.5 0.5 L10 9.5 M10 0.5 L0.5 9.5" stroke="#c4c4c4" stroke-width="1.4" fill="none"/></svg>
<svg style="left:192px;top:171px;" width="14" height="10" viewBox="0 0 14 10"><path d="M0.6 5.6 L4.4 9 L13 0.8" stroke="#c4c4c4" stroke-width="1.6" fill="none"/></svg>
<span class="t" style="left:228.5px;top:167px;font-family:'Liberation Serif',serif;font-style:italic;font-weight:bold;font-size:14.5px;line-height:16px;color:#707070;letter-spacing:-0.5px">f<span style="font-size:11px">x</span></span>
<svg style="left:1006px;top:172px;" width="8" height="6" viewBox="0 0 8 6"><path d="M0.6 0.8 L3.7 4.2 L6.8 0.8" fill="none" stroke="#666" stroke-width="1.7"/></svg>
<svg style="left:58px;top:750px;" width="14" height="14" viewBox="0 0 14 14"><circle cx="2.9" cy="3" r="2.9" fill="#777"/><rect x="7" y="1" width="6" height="2.4" fill="#777"/><path d="M12.4 3 V12.4 H1.6 V6.6" fill="none" stroke="#777" stroke-width="1.2"/><rect x="6.1" y="5.7" width="1.9" height="1" fill="#777"/><rect x="9.1" y="5.7" width="1.9" height="1" fill="#777"/><rect x="3.1" y="7.8" width="1.9" height="1" fill="#777"/><rect x="6.1" y="7.8" width="1.9" height="1" fill="#777"/><rect x="9.1" y="7.8" width="1.9" height="1" fill="#777"/><rect x="3.1" y="9.9" width="1.9" height="1" fill="#777"/><rect x="6.1" y="9.9" width="1.9" height="1" fill="#777"/><rect x="9.1" y="9.9" width="1.9" height="1" fill="#777"/></svg>
<svg style="left:729px;top:750px;" width="13" height="13" viewBox="0 0 13 13"><path d="M0.5 0.5 H12.5 V12.5 H0.5 Z M0.5 4.5 H12.5 M0.5 8.5 H12.5 M4.5 0.5 V12.5 M8.5 0.5 V12.5" fill="none" stroke="#666"/></svg>
<svg style="left:767px;top:750px;" width="14" height="13" viewBox="0 0 14 13"><path d="M0.5 0.5 H13.5 V12.5 H0.5 Z" fill="none" stroke="#666"/><path d="M3.5 3 H10.5 V10 H3.5 Z M5 4.9 H9 M5 6.5 H9 M5 8.1 H9" fill="none" stroke="#666" stroke-width="0.9"/></svg>
<svg style="left:805px;top:750px;" width="14" height="13" viewBox="0 0 14 13"><path d="M0.5 0.5 H13.5 V12.5 H0.5 Z M0.5 7.5 H8.5 V0.5 M4.5 0.5 V7.5" fill="none" stroke="#666"/></svg>
</div></body></html>
